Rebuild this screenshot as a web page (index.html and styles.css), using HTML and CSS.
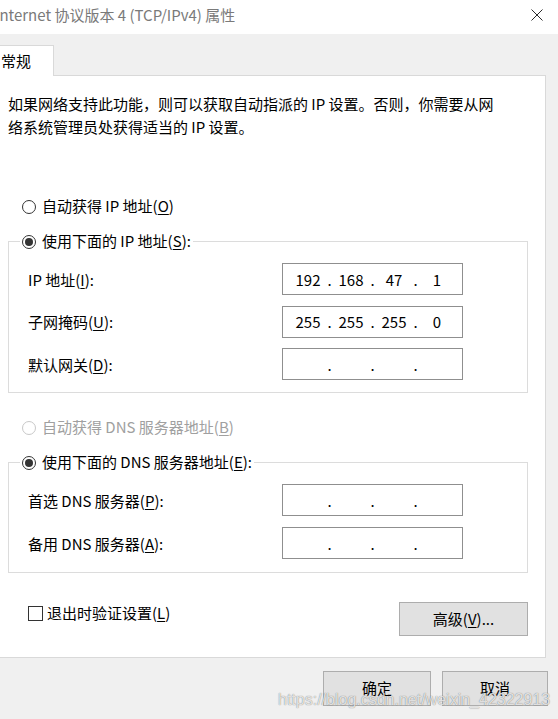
FILE: index.html
```html
<!DOCTYPE html>
<html lang="zh-CN">
<head>
    <meta charset="UTF-8">
    <meta name="viewport" content="width=device-width, initial-scale=1.0">
    <title>Internet 协议版本 4 (TCP/IPv4) 属性</title>
    <link rel="stylesheet" href="styles.css">
</head>
<body>
    <div class="titlebar">
        <span class="title">Internet 协议版本 4 (TCP/IPv4) 属性</span>
        <svg class="close" width="12" height="12" viewBox="0 0 12 12"><path d="M0.5 0.5L11.5 11.5M11.5 0.5L0.5 11.5" stroke="#2b2b2b" stroke-width="1" fill="none"/></svg>
    </div>
    <div class="tabs"><div class="tab">常规</div></div>
    <div class="panel">
        <p class="desc">如果网络支持此功能，则可以获取自动指派的 IP 设置。否则，你需要从网<br>络系统管理员处获得适当的 IP 设置。</p>

        <div class="radio first"><span class="dot"></span>自动获得 IP 地址(<u>O</u>)</div>
        <fieldset class="group">
            <legend class="radio"><span class="dot on"></span>使用下面的 IP 地址(<u>S</u>):</legend>
            <div class="row">
                <span>IP 地址(<u>I</u>):</span>
                <div class="ip"><span>192</span><i>.</i><span>168</span><i>.</i><span>47</span><i>.</i><span>1</span></div>
            </div>
            <div class="row">
                <span>子网掩码(<u>U</u>):</span>
                <div class="ip"><span>255</span><i>.</i><span>255</span><i>.</i><span>255</span><i>.</i><span>0</span></div>
            </div>
            <div class="row">
                <span>默认网关(<u>D</u>):</span>
                <div class="ip"><span></span><i>.</i><span></span><i>.</i><span></span><i>.</i><span></span></div>
            </div>
        </fieldset>

        <div class="radio disabled"><span class="dot"></span>自动获得 DNS 服务器地址(<u>B</u>)</div>
        <fieldset class="group dns">
            <legend class="radio"><span class="dot on"></span>使用下面的 DNS 服务器地址(<u>E</u>):</legend>
            <div class="row">
                <span>首选 DNS 服务器(<u>P</u>):</span>
                <div class="ip"><span></span><i>.</i><span></span><i>.</i><span></span><i>.</i><span></span></div>
            </div>
            <div class="row">
                <span>备用 DNS 服务器(<u>A</u>):</span>
                <div class="ip"><span></span><i>.</i><span></span><i>.</i><span></span><i>.</i><span></span></div>
            </div>
        </fieldset>

        <div class="options">
            <div class="check"><span class="box"></span>退出时验证设置(<u>L</u>)</div>
            <div class="btn adv">高级(<u>V</u>)...</div>
        </div>
    </div>
    <div class="footer">
        <div class="btn ok">确定</div>
        <div class="btn cancel">取消</div>
    </div>
    <div class="watermark">https://blog.csdn.net/weixin_42322913</div>
</body>
</html>
```

FILE: styles.css
```css
* {
    margin: 0;
    padding: 0;
    box-sizing: border-box;
}
body {
    position: relative;
    width: 558px;
    height: 719px;
    overflow: hidden;
    background-color: #f0f0f0;
    font-family: "Microsoft YaHei", "Noto Sans CJK SC", sans-serif;
    font-size: 15px;
    color: #000;
}
u {
    text-underline-offset: 2px;
}

.titlebar {
    display: flex;
    justify-content: space-between;
    align-items: center;
    height: 34px;
    padding-bottom: 4px;
    background-color: #fff;
}
.title {
    margin-left: -5px;
    line-height: 30px;
    color: #7a7a7a;
    white-space: nowrap;
}
.close {
    margin-right: 15px;
}

.tabs {
    display: flex;
    padding-top: 11px;
}
.tab {
    position: relative;
    z-index: 1;
    height: 31px;
    margin-left: -8px;
    margin-bottom: -1px;
    padding: 0 22px 0 8px;
    line-height: 29px;
    background-color: #fff;
    border: 1px solid #d9d9d9;
    border-bottom: none;
}

.panel {
    width: 547px;
    margin-left: -1px;
    padding: 16px 17px 21px 8px;
    background-color: #fff;
    border: 1px solid #d9d9d9;
}
.desc {
    line-height: 23px;
    white-space: nowrap;
}

.radio {
    line-height: 22px;
    white-space: nowrap;
}
.radio.first {
    margin-top: 57px;
    padding-left: 14px;
}
.radio.disabled {
    margin-top: 23px;
    padding-left: 14px;
    color: #a0a0a0;
}
.dot {
    display: inline-block;
    position: relative;
    width: 14px;
    height: 14px;
    margin-right: 6px;
    vertical-align: -2px;
    border: 1px solid #333;
    border-radius: 50%;
}
.disabled .dot {
    border-color: #c8c8c8;
}
.dot.on::after {
    content: "";
    position: absolute;
    left: 2px;
    top: 2px;
    width: 8px;
    height: 8px;
    border-radius: 50%;
    background-color: #333;
}

.group {
    margin-top: 13px;
    padding: 11px 0 12px 0;
    border: 1px solid #dcdcdc;
}
.group.dns {
    margin-top: 13px;
    padding-bottom: 13px;
}
.group legend {
    margin-left: 11px;
    padding: 0 2px;
}
.row {
    display: grid;
    grid-template-columns: 254px 181px;
    align-items: center;
    height: 32px;
    padding-left: 19px;
    margin-top: 10.5px;
    white-space: nowrap;
}
.row:first-of-type {
    margin-top: 0;
}
.dns .row {
    margin-top: 11px;
}
.dns .row:first-of-type {
    margin-top: 0;
}
.ip {
    display: flex;
    align-items: center;
    height: 32px;
    padding-left: 8px;
    border: 1px solid #8f8f8f;
}
.ip span {
    width: 34px;
    text-align: center;
}
.ip i {
    width: 9px;
    font-style: normal;
    text-align: center;
}

.options {
    display: flex;
    justify-content: space-between;
    align-items: flex-start;
    margin-top: 29px;
    padding-left: 20px;
}
.check {
    line-height: 22px;
    white-space: nowrap;
}
.box {
    display: inline-block;
    width: 15px;
    height: 15px;
    margin-right: 4px;
    vertical-align: -2px;
    border: 1px solid #333;
}

.btn {
    height: 34px;
    line-height: 32px;
    text-align: center;
    background-color: #e1e1e1;
    border: 1px solid #adadad;
}
.btn.adv {
    width: 129px;
}

.footer {
    display: flex;
    justify-content: flex-end;
    gap: 11px;
    padding: 13px 10px 0 0;
}
.btn.ok {
    width: 108px;
    height: 35px;
}
.btn.cancel {
    width: 106px;
    height: 35px;
}

.watermark {
    position: absolute;
    left: 278px;
    top: 691px;
    font-family: "Liberation Sans", Arial, sans-serif;
    font-size: 16px;
    line-height: 18px;
    color: rgba(255, 255, 255, 0.8);
    text-shadow: 0 0 1px rgba(0, 0, 0, 0.6);
    white-space: nowrap;
}
```
